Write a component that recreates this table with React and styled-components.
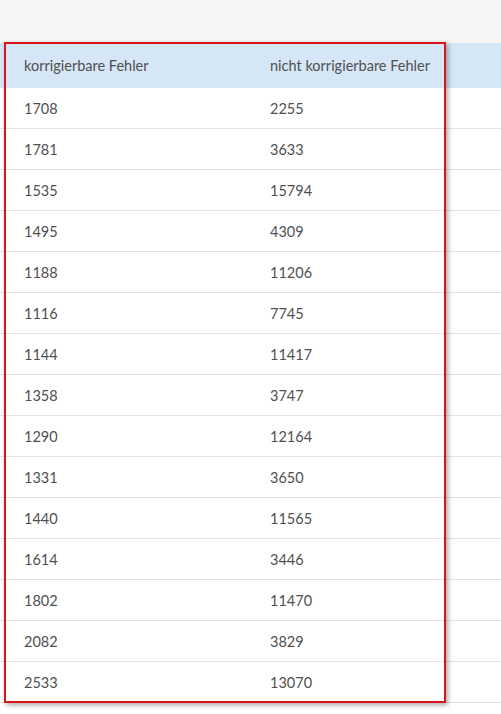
import styled, { createGlobalStyle } from "styled-components";

const rows = [
  [1708, 2255],
  [1781, 3633],
  [1535, 15794],
  [1495, 4309],
  [1188, 11206],
  [1116, 7745],
  [1144, 11417],
  [1358, 3747],
  [1290, 12164],
  [1331, 3650],
  [1440, 11565],
  [1614, 3446],
  [1802, 11470],
  [2082, 3829],
  [2533, 13070],
];

const App = () => {
  return (
    <Page>
      <GlobalStyle />
      <TopBar />
      <TableWrap>
        <Table>
          <thead>
            <tr>
              <HeadCell>korrigierbare Fehler</HeadCell>
              <HeadCell>nicht korrigierbare Fehler</HeadCell>
              <HeadCell />
            </tr>
          </thead>
          <tbody>
            {rows.map(([a, b], i) => (
              <Row key={i}>
                <Cell>{a}</Cell>
                <Cell>{b}</Cell>
                <Cell />
              </Row>
            ))}
          </tbody>
        </Table>
        <Highlight />
      </TableWrap>
    </Page>
  );
};

export default App;

const GlobalStyle = createGlobalStyle`
  html, body {
    margin: 0;
    padding: 0;
    background: #fff;
  }
  body {
    font-family: Lato, "Open Sans", sans-serif;
  }
`;

const Page = styled.div`
  width: 501px;
  height: 714px;
  overflow: hidden;
  background: #fff;
`;

const TopBar = styled.div`
  height: 43px;
  background: #f6f6f5;
`;

const TableWrap = styled.div`
  position: relative;
`;

const Table = styled.table`
  width: 100%;
  border-collapse: collapse;
  table-layout: fixed;
  font-size: 14.5px;
  color: #505050;
`;

const HeadCell = styled.th`
  height: 45px;
  padding: 0 0 0 24px;
  background: #d5e6f6;
  text-align: left;
  font-weight: 400;
  color: #505050;

  &:first-child {
    width: 222px;
  }
  &:nth-child(2) {
    width: 200px;
  }
`;

const Row = styled.tr`
  border-bottom: 1px solid #e4e4e4;
`;

const Cell = styled.td`
  height: 40px;
  padding: 0 0 0 24px;
`;

const Highlight = styled.div`
  position: absolute;
  left: 4px;
  top: -1px;
  width: 438px;
  height: 657px;
  border: 2px solid #d9141b;
  box-shadow: 2px 2px 5px rgba(0, 0, 0, 0.35);
  pointer-events: none;
`;
